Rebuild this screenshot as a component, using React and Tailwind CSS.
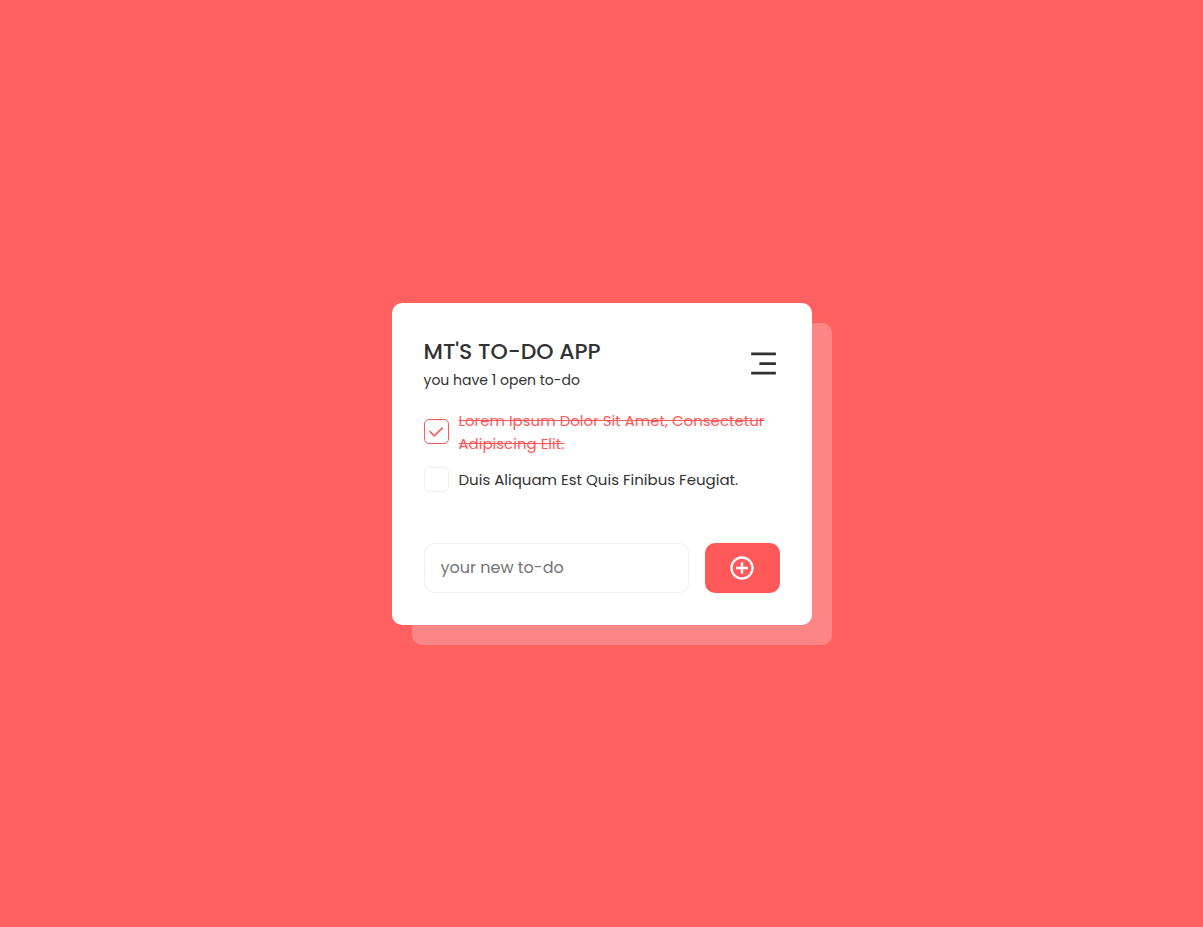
import { useState } from "react";
import { RiAddCircleLine, RiCheckLine, RiMenu3Line } from "react-icons/ri";

const initialTodos = [
  { id: 1, text: "Lorem Ipsum Dolor Sit Amet, Consectetur Adipiscing Elit.", done: true },
  { id: 2, text: "Duis Aliquam Est Quis Finibus Feugiat.", done: false },
];

function TodoItem({ todo, onToggle }) {
  return (
    <li>
      <label className="flex cursor-pointer items-center gap-[10px]">
        <span className="grid shrink-0 place-items-center">
          <input
            type="checkbox"
            checked={todo.done}
            onChange={() => onToggle(todo.id)}
            className="col-start-1 row-start-1 size-[25px] appearance-none rounded-[5px] border border-[#eeeeee] bg-white checked:border-[#ff5959]"
          />
          {todo.done && (
            <RiCheckLine className="pointer-events-none col-start-1 row-start-1 size-5 text-[#ff5959]" />
          )}
        </span>
        <span
          className={
            todo.done
              ? "text-[15px] leading-[23px] text-[#ff5959] line-through"
              : "text-[15px] leading-[23px] text-[#323232]"
          }
        >
          {todo.text}
        </span>
      </label>
    </li>
  );
}

export default function App() {
  const [todos, setTodos] = useState(initialTodos);
  const [draft, setDraft] = useState("");
  const open = todos.filter((t) => !t.done).length;

  const toggle = (id) =>
    setTodos(todos.map((t) => (t.id === id ? { ...t, done: !t.done } : t)));

  const add = (e) => {
    e.preventDefault();
    if (!draft.trim()) return;
    setTodos([...todos, { id: Date.now(), text: draft.trim(), done: false }]);
    setDraft("");
  };

  return (
    <div className="flex min-h-screen items-center justify-center bg-[#ff6161] font-['Poppins','Inter',sans-serif] text-[#323232]">
      <main className="w-full max-w-[420px] rounded-[10px] bg-white p-8 shadow-[20px_20px_0_#fc8686]">
        <header className="flex items-center justify-between">
          <div className="flex flex-col gap-0.5 pb-0.5">
            <h1 className="text-[22px] leading-[33px] font-medium">MT'S TO-DO APP</h1>
            <p className="text-[14px] leading-[21px]">you have {open} open to-do</p>
          </div>
          <button type="button" aria-label="Menu" className="cursor-pointer">
            <RiMenu3Line className="size-[33px]" />
          </button>
        </header>

        <ul className="mt-4 flex flex-col gap-3">
          {todos.map((t) => (
            <TodoItem key={t.id} todo={t} onToggle={toggle} />
          ))}
        </ul>

        <form onSubmit={add} className="mt-[51px] flex gap-4">
          <input
            type="text"
            aria-label="New to-do"
            placeholder="your new to-do"
            value={draft}
            onChange={(e) => setDraft(e.target.value)}
            className="h-[50px] min-w-0 flex-1 rounded-[10px] border border-[#eeeeee] bg-white px-4 text-[16px] outline-none placeholder:text-[#757575]"
          />
          <button
            type="submit"
            aria-label="Add to-do"
            className="flex h-[50px] w-[75px] cursor-pointer items-center justify-center rounded-[10px] bg-[#ff5959] text-white"
          >
            <RiAddCircleLine className="size-7" />
          </button>
        </form>
      </main>
    </div>
  );
}
